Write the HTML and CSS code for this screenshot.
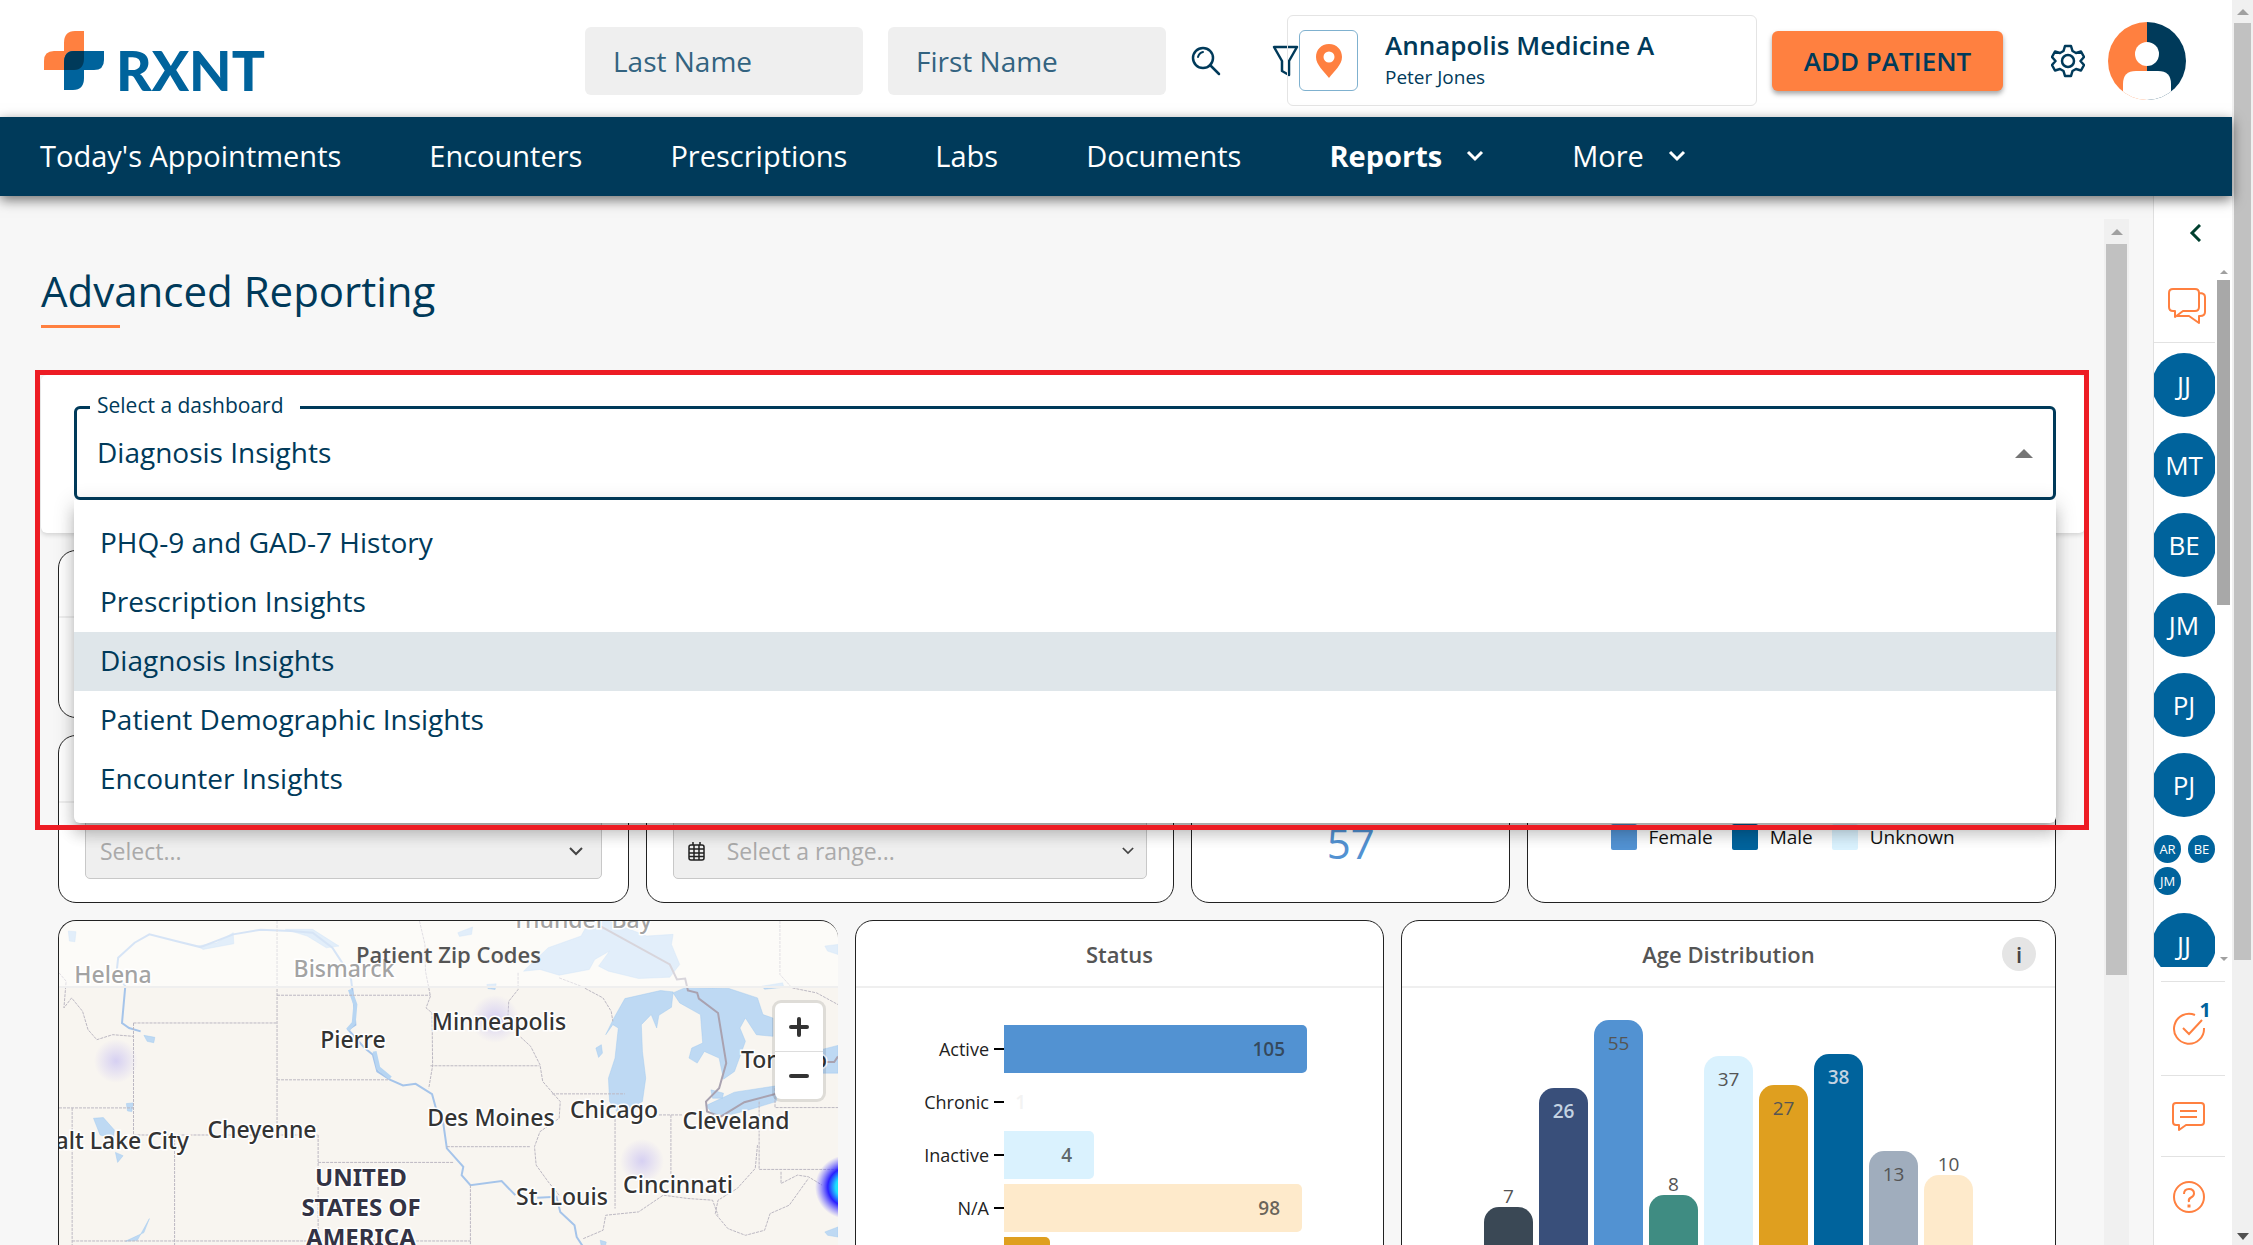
FILE: index.html
```html
<!DOCTYPE html>
<html lang="en">
<head>
	<meta charset="utf-8">
	<title>Advanced Reporting</title>
	<link rel="stylesheet" href="styles.css">
</head>
<body>

	<div class="page">

		<header class="topbar">
			<a class="logo" href="#" aria-label="RXNT home">
				<svg width="60" height="59" viewBox="0 0 60 59">
					<path fill="#ff8040" d="M20 20V12Q20 0 31 0H40V26Q40 39 29 39H0V30Q0 20 10 20Z"/>
					<path fill="#00639c" d="M29 20H60V29Q60 39 50 39H40V47Q40 59 29 59H20V32Q20 20 29 20Z"/>
					<path fill="#003a5a" d="M30 20H40V27Q40 39 30 39H20V32Q20 20 30 20Z"/>
				</svg>
				<span class="logo-text">RXNT</span>
			</a>

			<form class="search">
				<input type="text" placeholder="Last Name" aria-label="Last Name">
				<input type="text" placeholder="First Name" aria-label="First Name">
				<button type="button" class="icon-button search-button" aria-label="Search">
					<svg width="30" height="30" viewBox="0 0 30 30" fill="none" stroke="#003a5a" stroke-width="2.500" stroke-linecap="round">
						<circle cx="12" cy="12" r="10"/><path d="M19 19l9 9"/><path stroke-width="2" d="M7 11q1-4 5-5"/>
					</svg>
				</button>
				<button type="button" class="icon-button" aria-label="Filter">
					<svg width="27" height="32" viewBox="0 0 27 32" fill="none" stroke="#003a5a" stroke-width="2.500" stroke-linejoin="round">
						<path d="M2 2H25L17 16V30L10 26V16Z"/>
					</svg>
				</button>
			</form>

			<button class="location">
				<span class="location-pin">
					<svg width="26" height="34" viewBox="0 0 26 34"><path fill="#ff8040" fill-rule="evenodd" d="M13 0C5 0 0 6 0 13c0 8 8 14 13 21 5-7 13-13 13-21C26 6 21 0 13 0zm0 7.500a5.500 5.500 0 1 1 0 11 5.500 5.500 0 0 1 0-11z"/></svg>
				</span>
				<span>
					<span class="location-name">Annapolis Medicine A</span>
					<span class="location-user">Peter Jones</span>
				</span>
			</button>

			<button class="add-patient">ADD PATIENT</button>

			<button class="icon-button settings" aria-label="Settings">
				<svg width="34" height="34" viewBox="0 0 34 34" fill="none" stroke="#003a5a" stroke-width="2.500" stroke-linejoin="round">
					<path d="M14 2h6l1.500 5 3.500 2 5-1.500 3 5.500-3.500 4 3.500 4-3 5.500-5-1.500-3.500 2-1.500 5h-6l-1.500-5-3.500-2-5 1.500-3-5.500 3.500-4-3.500-4 3-5.500 5 1.500 3.500-2z"/>
					<circle cx="17" cy="17" r="6"/>
				</svg>
			</button>

			<button class="icon-button" aria-label="Account">
				<svg width="78" height="78" viewBox="0 0 78 78">
					<clipPath id="face"><circle cx="39" cy="39" r="39"/></clipPath>
					<g clip-path="url(#face)">
						<path fill="#ff8040" d="M0 0H39V78H0z"/><path fill="#003a5a" d="M39 0H78V78H39z"/>
						<circle fill="#fff" cx="39" cy="32" r="12"/>
						<path fill="#fff" d="M15 78V62Q15 49 28 49H50Q63 49 63 62V78z"/>
					</g>
				</svg>
			</button>
		</header>

		<nav class="nav">
			<a href="#">Today's Appointments</a>
			<a href="#">Encounters</a>
			<a href="#">Prescriptions</a>
			<a href="#">Labs</a>
			<a href="#">Documents</a>
			<a href="#" class="active">Reports <svg width="18" height="12" viewBox="0 0 18 12"><path d="M2 2l7 7 7-7"/></svg></a>
			<a href="#">More <svg width="18" height="12" viewBox="0 0 18 12"><path d="M2 2l7 7 7-7"/></svg></a>
		</nav>

		<div class="main">

			<main class="content">
				<h1>Advanced Reporting</h1>

				<div class="picker">
					<div class="picker-field">
						<label for="dashboard">Select a dashboard</label>
						<select id="dashboard">
							<option>PHQ-9 and GAD-7 History</option>
							<option>Prescription Insights</option>
							<option selected>Diagnosis Insights</option>
							<option>Patient Demographic Insights</option>
							<option>Encounter Insights</option>
						</select>
						<svg class="caret" width="18" height="9" viewBox="0 0 18 9"><path fill="#757575" d="M0 9L9 0l9 9z"/></svg>
						<ul class="menu">
							<li>PHQ-9 and GAD-7 History</li>
							<li>Prescription Insights</li>
							<li class="selected">Diagnosis Insights</li>
							<li>Patient Demographic Insights</li>
							<li>Encounter Insights</li>
						</ul>
					</div>
					<div class="callout"></div>
				</div>

				<div class="row row-top">
					<section class="card filter"><h2></h2></section>
				</div>

				<div class="row row-filters">
					<section class="card filter">
						<h2></h2>
						<div class="filter-body">
							<select class="field" aria-label="Diagnosis"><option>Select...</option></select>
							<svg class="field-arrow" width="14" height="9" viewBox="0 0 14 9"><path d="M1 1l6 6 6-6"/></svg>
						</div>
					</section>
					<section class="card filter">
						<h2></h2>
						<div class="filter-body">
							<button class="field range">
								<svg width="17" height="19" viewBox="0 0 17 19" fill="none" stroke="#222" stroke-width="1.500">
									<rect x="1" y="3" width="15" height="15" rx="2"/><path d="M1 7h15M1 11h15M1 14.500h15M6 3v15M11 3v15M5 0v3M12 0v3"/>
								</svg>
								<span>Select a range...</span>
							</button>
							<svg class="field-arrow range-arrow" width="12" height="8" viewBox="0 0 14 9"><path d="M1 1l6 6 6-6"/></svg>
						</div>
					</section>
					<section class="card filter">
						<h2></h2>
						<div class="count">57</div>
					</section>
					<section class="card filter">
						<h2></h2>
						<ul class="legend">
							<li><i class="blue"></i>Female</li>
							<li><i class="navy"></i>Male</li>
							<li><i class="ice"></i>Unknown</li>
						</ul>
					</section>
				</div>

				<div class="row row-charts">
					<section class="card map">
						<h2>Patient Zip Codes</h2>
						<svg class="map-canvas" width="779" height="326" viewBox="0 0 779 326">
							<defs>
								<radialGradient id="heat"><stop offset="0" stop-color="#d6d0f2"/><stop offset="1" stop-color="#d6d0f2" stop-opacity="0"/></radialGradient>
								<radialGradient id="hot"><stop offset="0" stop-color="#19ffb0"/><stop offset=".35" stop-color="#1ee0ff"/><stop offset=".6" stop-color="#2a20ff"/><stop offset="1" stop-color="#5a50ff" stop-opacity="0"/></radialGradient>
							</defs>
							<svg width="779" height="326" viewBox="107 60 1422 975" preserveAspectRatio="none">
								<!-- lakes -->
								<g fill="#bed9f3" stroke="#9fc8ef">
									<path d="M955 210L1000 140L1060 105L1075 60L1110 60L1180 105L1228 100L1225 130L1240 190L1222 228L1165 232L1110 210L1092 195L1112 150L1085 175L1075 205L1020 222L985 205Z"/>
									<path d="M1105 400L1120 350L1140 292L1205 268L1228 272L1225 318L1202 342L1198 380L1188 340L1170 370L1172 450L1178 530L1172 600L1130 640L1112 600L1110 530L1122 470L1128 380L1118 370Z"/>
									<path d="M1228 275L1252 258L1330 262L1382 290L1392 340L1410 350L1410 405L1380 400L1360 350L1350 380L1360 420L1340 510L1320 533L1312 470L1285 450L1272 485L1257 470L1262 440L1282 425L1278 340L1240 305Z"/>
									<path d="M1288 612L1340 572L1420 552L1416 600L1360 628L1325 642L1300 636Z"/>
									<path d="M1498 445L1529 432V515L1500 515Z"/>
									<path d="M124 90L138 92L136 122L126 120ZM835 95L862 78L860 100L838 106ZM888 250L905 248L903 265L890 262ZM262 402L282 408L280 424L268 420ZM1087 440L1097 430L1099 455L1092 468ZM170 650L188 648L208 685L206 712L182 700ZM210 752L224 762L214 782ZM230 606L242 604L240 630L232 628ZM1390 255L1428 245L1430 258L1395 264ZM1505 135L1529 130V160L1510 150ZM1297 565L1320 575L1318 590L1300 590ZM360 135L395 125L425 95L426 128L370 145ZM520 85L570 85L618 135L595 140L560 105ZM1505 990L1529 975V1005L1510 1000ZM1095 1015L1106 1020L1104 1035H1097ZM228 1018L262 992L272 950L250 1015Z"/>
								</g>
								<g fill="none" stroke="#a5c4ea" stroke-width="2">
									<path vector-effect="non-scaling-stroke" d="M256 390L235 380L222 365L228 255L212 215L215 170L245 125L272 100L320 120L365 138L425 100L475 86L530 90L570 95L606 140L622 180L640 232L645 300L648 370L635 385L665 440L680 460L688 510L712 535L735 552L758 547L788 578L795 620L808 660L815 740L845 795L842 820L858 850L915 838L940 880"/>
									<path vector-effect="non-scaling-stroke" stroke-width="4" stroke="#b7d5f2" d="M638 265L648 310L645 365L634 386M683 450L690 500L712 530"/>
									<path vector-effect="non-scaling-stroke" d="M980 888L1015 885L1022 930L1048 970L1052 1005L1064 1035"/>
								</g>
								<!-- state borders -->
								<g fill="none" stroke="#bcb8c2" stroke-dasharray="3 1">
									<path vector-effect="non-scaling-stroke" d="M505 60V670M505 282H785M243 365H505M243 365V698M505 535H710M785 493H984M107 619H243M131 619V1035M243 700H580M318 700V1035M580 700V1035M580 782H828M858 850V1035M131 1017H858M815 735H968M1007 577H1140M1122 640V920M1224 640V880M1195 640H1245M1385 600V803H1529M1414 560V618H1529"/>
									<path vector-effect="non-scaling-stroke" d="M765 60L775 130L776 210L785 285L777 320L788 335L789 493L782 560M945 215V265L928 300L926 360L945 400L968 435L985 490L990 540L1022 600L1020 650L985 690L975 735L978 790L1000 840L1020 880M1020 230L1060 255L1100 290L1115 330L1118 360M1423 60V220L1445 260L1490 275L1529 310M107 215L120 240L116 320L130 290L150 330L160 385L176 415L205 400L243 405M1382 730L1378 800L1345 860L1310 895L1305 935L1328 980L1360 1000L1395 985L1405 935L1440 910L1475 830M1064 1010L1100 985L1105 940L1165 930L1210 880L1255 890L1300 895L1310 940M1425 810V845L1455 820L1475 825L1500 850"/>
								</g>
								<path vector-effect="non-scaling-stroke" fill="none" stroke="#a9a2b0" stroke-width="2" d="M1095 75L1222 190L1235 235L1250 232L1255 268L1272 275L1275 292L1310 335L1325 485L1312 560L1288 600L1290 630L1315 645L1358 602L1420 575M1500 482H1522L1529 465"/>
							</svg>
							<g fill="url(#heat)"><circle cx="57" cy="140" r="22"/><circle cx="436" cy="98" r="24"/><circle cx="583" cy="240" r="22"/></g>
							<circle fill="url(#hot)" cx="788" cy="266" r="32"/>
							<g class="map-label">
								<text x="54" y="62">Helena</text>
								<text x="285" y="56">Bismarck</text>
								<text x="523" y="7">Thunder Bay</text>
								<text x="440" y="109">Minneapolis</text>
								<text x="294" y="127">Pierre</text>
								<text x="725" y="147">Toronto</text>
								<text x="432" y="205">Des Moines</text>
								<text x="555" y="197">Chicago</text>
								<text x="677" y="208">Cleveland</text>
								<text x="203" y="217">Cheyenne</text>
								<text x="57" y="228">Salt Lake City</text>
								<text x="619" y="272">Cincinnati</text>
								<text x="503" y="284">St. Louis</text>
								<text class="country" x="302" y="265">UNITED</text>
								<text class="country" x="302" y="295">STATES OF</text>
								<text class="country" x="302" y="325">AMERICA</text>
							</g>
						</svg>
						<div class="map-zoom">
							<button aria-label="Zoom in"><svg width="20" height="20"><path d="M10 2v16M2 10h16"/></svg></button>
							<button aria-label="Zoom out"><svg width="20" height="20"><path d="M2 10h16"/></svg></button>
						</div>
					</section>

					<section class="card">
						<h2>Status</h2>
						<div class="status">
							<span class="name">Active</span><div class="bar blue" style="width: 303px">105</div>
							<span class="name">Chronic</span><div class="bar tiny" style="width: 22px">1</div>
							<span class="name">Inactive</span><div class="bar ice" style="width: 90px">4</div>
							<span class="name">N/A</span><div class="bar cream" style="width: 298px">98</div>
							<span class="name"></span><div class="bar gold" style="width: 46px"></div>
						</div>
					</section>

					<section class="card">
						<h2>Age Distribution</h2>
						<button class="info" aria-label="Info">i</button>
						<div class="ages">
							<div class="age out slate" style="height: 94px"><span>7</span></div>
							<div class="age light indigo" style="height: 213px"><span>26</span></div>
							<div class="age blue" style="height: 281px"><span>55</span></div>
							<div class="age out teal" style="height: 106px"><span>8</span></div>
							<div class="age ice" style="height: 245px"><span>37</span></div>
							<div class="age gold" style="height: 216px"><span>27</span></div>
							<div class="age light navy" style="height: 247px"><span>38</span></div>
							<div class="age gray" style="height: 150px"><span>13</span></div>
							<div class="age out cream" style="height: 126px"><span>10</span></div>
						</div>
					</section>
				</div>
			</main>

			<div class="scroll content-scroll">
				<svg width="12" height="6"><path d="M0 6L6 0l6 6z"/></svg>
				<div class="thumb"></div>
			</div>

			<aside class="side">
				<button class="icon-button collapse" aria-label="Collapse">
					<svg width="12" height="18" viewBox="0 0 12 18" fill="none" stroke="#00402f" stroke-width="3"><path d="M11 1L3 9l8 8"/></svg>
				</button>
				<div class="people">
					<div class="people-list">
						<button class="icon-button chats" aria-label="Chats">
							<svg width="38" height="36" viewBox="0 0 38 36" fill="none" stroke="#ff8040" stroke-width="2" stroke-linejoin="round">
								<path d="M5 1H27Q31 1 31 5V19Q31 23 27 23H15L7 29V23H5Q1 23 1 19V5Q1 1 5 1ZM31 5Q37 5 37 9V24Q37 28 32 28H31V35L21 28H9"/>
							</svg>
						</button>
						<button class="person">JJ</button>
						<button class="person">MT</button>
						<button class="person">BE</button>
						<button class="person">JM</button>
						<button class="person">PJ</button>
						<button class="person">PJ</button>
						<div class="group">
							<button>AR</button>
							<button>BE</button>
							<button>JM</button>
						</div>
						<button class="person">JJ</button>
					</div>
					<div class="people-scroll">
						<svg width="8" height="4"><path d="M0 4l4-4 4 4z"/></svg>
						<div class="thumb"></div>
						<svg class="down" width="8" height="4"><path d="M0 0l4 4 4-4z"/></svg>
					</div>
				</div>
				<div class="tools">
					<button class="tasks" aria-label="Tasks">
						<svg width="34" height="34" viewBox="0 0 34 34" fill="none" stroke="#ff8040" stroke-width="2"><path d="M23 3A15 15 0 1 0 32 16M11 16l6 6L30 8"/></svg>
						<b>1</b>
					</button>
					<button class="comments" aria-label="Comments">
						<svg width="34" height="30" viewBox="0 0 34 30" fill="none" stroke="#ff8040" stroke-width="2" stroke-linejoin="round"><path d="M4 2H29Q32 2 32 5V21Q32 24 29 24H14L7 29V24H4Q1 24 1 21V5Q1 2 4 2ZM8 10H25M8 16H25"/></svg>
					</button>
					<button class="help" aria-label="Help">
						<svg width="34" height="34" viewBox="0 0 34 34" fill="none" stroke="#ff8040" stroke-width="2"><circle cx="17" cy="17" r="15"/><path d="M12 14Q12 9 17 9T22 13.500Q22 16 19 17.500T17 22"/><path stroke-width="3" d="M17 24.500v3"/></svg>
					</button>
				</div>
			</aside>
		</div>
	</div>

	<div class="scroll page-scroll">
		<svg width="12" height="6"><path d="M0 6L6 0l6 6z"/></svg>
		<div class="thumb"></div>
		<svg class="down" width="12" height="7"><path d="M0 0l6 7 6-7z"/></svg>
	</div>

</body>
</html>
```
FILE: styles.css
```css
* {
	box-sizing: border-box;
}
body {
	margin: 0;
	display: flex;
	height: 100vh;
	overflow: hidden;
	background: #f7f7f7;
	color: #003a5a;
	font-family: "Open Sans", sans-serif;
	font-size: 28px;
}
button, input, select {
	font-family: inherit;
	color: inherit;
}
button {
	border: 0;
	padding: 0;
	background: none;
	cursor: pointer;
}
svg {
	display: block;
}
ul {
	margin: 0;
	padding: 0;
	list-style: none;
}
.page {
	flex: 1;
	min-width: 0;
	display: flex;
	flex-direction: column;
}

/* top bar */
.topbar {
	flex: none;
	display: flex;
	align-items: center;
	height: 117px;
	padding: 4px 46px 0 44px;
	background: #fff;
}
.logo {
	display: flex;
	align-items: flex-end;
	gap: 12px;
	margin-right: auto;
	text-decoration: none;
	color: #00639c;
}
.logo-text {
	font-family: Lato, sans-serif;
	font-weight: 900;
	font-size: 55px;
	line-height: 40px;
}
.search {
	display: flex;
	align-items: center;
	gap: 25px;
}
.search input {
	width: 278px;
	height: 68px;
	padding: 0 28px;
	border: 0;
	border-radius: 6px;
	background: #efefef;
	font-size: 28px;
}
.search input::placeholder {
	color: #336380;
	opacity: 1;
}
.search-button {
	margin-right: 26px;
}
.location {
	display: flex;
	align-items: center;
	gap: 27px;
	width: 470px;
	height: 91px;
	margin: 0 15px 0 -12px;
	padding: 0 11px;
	border: 1px solid #e4e4e4;
	border-radius: 6px;
	text-align: left;
}
.location-pin {
	display: flex;
	align-items: center;
	justify-content: center;
	width: 59px;
	height: 61px;
	border: 1px solid #7fb1cf;
	border-radius: 6px;
	background: #fff;
}
.location-name, .location-user {
	display: block;
}
.location-name {
	font-size: 26px;
	font-weight: 600;
	line-height: 32px;
}
.location-user {
	font-size: 19px;
	line-height: 32px;
}
.add-patient {
	width: 231px;
	height: 60px;
	margin-right: 48px;
	border-radius: 6px;
	background: #ff8040;
	box-shadow: 0 3px 5px rgba(0, 0, 0, .35);
	font-size: 26px;
	font-weight: 600;
}
.settings {
	margin-right: 23px;
}

/* navigation */
.nav {
	flex: none;
	position: relative;
	display: flex;
	align-items: center;
	gap: 88px;
	height: 79px;
	padding: 0 40px 2px;
	background: #003a5a;
	box-shadow: 0 4px 12px rgba(0, 0, 0, .55);
}
.nav a {
	display: flex;
	align-items: center;
	gap: 24px;
	color: #fff;
	font-size: 29px;
	text-decoration: none;
}
.nav .active {
	font-weight: 700;
}
.nav path {
	fill: none;
	stroke: #fff;
	stroke-width: 3;
}

.main {
	flex: 1;
	min-height: 0;
	display: flex;
}
.content {
	flex: 1;
	min-width: 0;
	overflow: hidden;
	padding: 67px 19px 0 41px;
}
h1 {
	margin: 0 0 47px;
	font-size: 42px;
	font-weight: 400;
	line-height: 56px;
}
h1::after {
	content: "";
	display: block;
	width: 79px;
	height: 3px;
	margin-top: 6px;
	background: #ff8040;
}

/* dashboard picker */
.picker {
	position: relative;
	z-index: 1;
	padding: 31px 29px 33px 33px;
	border-radius: 6px;
	background: #fff;
	box-shadow: 0 2px 5px rgba(0, 0, 0, .15);
}
.picker-field {
	position: relative;
}
.picker-field select {
	display: block;
	width: 100%;
	height: 94px;
	padding: 0 20px 2px;
	appearance: none;
	border: 3px solid #003a5a;
	border-radius: 6px;
	background: #fff;
	font-size: 28px;
}
.picker-field label {
	position: absolute;
	top: -13px;
	left: 16px;
	padding: 0 16px 0 7px;
	background: #fff;
	font-size: 21px;
	line-height: 24px;
}
.caret {
	position: absolute;
	top: 43px;
	right: 23px;
}
.menu {
	position: absolute;
	top: 94px;
	left: 0;
	right: 0;
	padding: 14px 0;
	border-radius: 0 0 6px 6px;
	background: #fff;
	box-shadow: 0 7px 7px -4px rgba(0, 0, 0, .2), 0 12px 14px 1px rgba(0, 0, 0, .14), 0 4px 20px 3px rgba(0, 0, 0, .12);
}
.menu li {
	padding: 0 26px 2px;
	line-height: 57px;
}
.menu .selected {
	background: #dfe6ea;
}
.callout {
	position: absolute;
	top: -5px;
	left: -6px;
	right: -4px;
	height: 460px;
	border: 5px solid #ed1c24;
	pointer-events: none;
}

/* cards */
.row {
	display: grid;
	gap: 17px;
	margin: 17px 29px 0 17px;
}
.row-top {
	grid-template-columns: 1fr;
}
.row-filters {
	grid-template-columns: 571fr 529fr 319fr 529fr;
}
.row-charts {
	grid-template-columns: 780fr 529fr 655fr;
}
.card {
	position: relative;
	min-width: 0;
	border: 1px solid #222;
	border-radius: 18px;
	background: #fff;
}
.filter {
	height: 168px;
}
.card h2 {
	height: 67px;
	margin: 0;
	border-bottom: 2px solid #efefef;
	color: #555;
	font-size: 22px;
	font-weight: 600;
	line-height: 67px;
	text-align: center;
}
.filter-body {
	position: relative;
	margin: 10px 26px;
}
.field {
	display: flex;
	align-items: center;
	gap: 22px;
	width: 100%;
	height: 66px;
	padding: 10px 14px 0;
	appearance: none;
	border: 1px solid #c8c8c8;
	border-radius: 5px;
	background: #efefef;
	color: #aaa;
	opacity: 1;
	font-size: 23px;
}
.field-arrow {
	position: absolute;
	top: 34px;
	right: 19px;
	fill: none;
	stroke: #444;
	stroke-width: 2;
}
.range-arrow {
	right: 13px;
}
.count {
	color: #5292d2;
	font-size: 42px;
	line-height: 80px;
	text-align: center;
}
.legend {
	display: flex;
	justify-content: center;
	gap: 19px;
	padding: 21px 18px 0 0;
	color: #111;
	font-size: 19px;
	line-height: 27px;
}
.legend li {
	display: flex;
	gap: 12px;
}
.legend i {
	width: 26px;
	height: 26px;
	border-radius: 2px;
}

.blue { background: #5292d2; }
.navy { background: #00639c; }
.ice { background: #daf2fe; }
.cream { background: #feeacb; }
.gold { background: #df9f1f; }
.slate { background: #3a4855; }
.indigo { background: #394f7a; }
.teal { background: #3f8c82; }
.gray { background: #a0adbd; }

/* map */
.map {
	height: 400px;
	overflow: hidden;
	border-right: 0;
	background: #f8f5f0;
}
.map h2 {
	position: relative;
	z-index: 1;
	background: rgba(255, 255, 255, .55);
}
.map-canvas {
	width: 100%;
	height: auto;
	margin-top: -67px;
}
.map-label {
	fill: #333;
	stroke: #fff;
	stroke-width: 3;
	paint-order: stroke;
	text-anchor: middle;
	font-family: "Noto Sans", sans-serif;
	font-size: 23px;
	font-weight: 500;
}
.map-label .country {
	fill: #334;
	font-size: 24px;
	font-weight: 700;
}
.map-zoom {
	position: absolute;
	top: 82px;
	right: 15px;
	border-radius: 6px;
	background: #fff;
	box-shadow: 0 0 0 3px rgba(0, 0, 0, .1);
}
.map-zoom button {
	display: flex;
	align-items: center;
	justify-content: center;
	width: 48px;
	height: 48px;
}
.map-zoom button + button {
	border-top: 1px solid #ddd;
}
.map-zoom path {
	stroke: #333;
	stroke-width: 4;
	stroke-linecap: round;
}

/* status chart */
.status {
	display: grid;
	grid-template-columns: 133px 1fr;
	grid-auto-rows: 48px;
	row-gap: 5px;
	column-gap: 15px;
	padding-top: 37px;
	color: #222;
	font-size: 18px;
	line-height: 48px;
}
.name {
	text-align: right;
}
.bar {
	position: relative;
	padding-right: 22px;
	border-radius: 0 5px 5px 0;
	color: rgba(40, 40, 40, .7);
	font-size: 19px;
	font-weight: 600;
	text-align: right;
}
.bar::before {
	content: "";
	position: absolute;
	top: 23px;
	left: -10px;
	width: 10px;
	height: 2px;
	background: #000;
}
.tiny {
	padding-right: 0;
	color: #f3f3f3;
}

/* age chart */
.info {
	position: absolute;
	top: 16px;
	right: 19px;
	width: 34px;
	height: 34px;
	border-radius: 50%;
	background: #e5e5e5;
	color: #444;
	font-size: 22px;
	font-weight: 600;
	line-height: 34px;
}
.ages {
	display: flex;
	align-items: flex-end;
	justify-content: center;
	gap: 6px;
	height: 313px;
}
.age {
	width: 49px;
	border-radius: 15px 15px 0 0;
	color: #555;
	font-size: 19px;
	line-height: 26px;
	text-align: center;
}
.age span {
	display: block;
	margin-top: 10px;
}
.out span {
	margin-top: -24px;
}
.light {
	color: #c4d3e2;
	font-weight: 600;
}

/* scroll bars */
.scroll {
	flex: none;
	display: flex;
	flex-direction: column;
	align-items: center;
	background: #f0f0f0;
	fill: #a0a0a0;
}
.thumb {
	background: #c1c1c1;
}
.content-scroll {
	width: 25px;
	margin: 23px 24px 0 0;
	padding-top: 10px;
}
.content-scroll .thumb {
	width: 21px;
	height: 731px;
	margin-top: 9px;
}
.page-scroll {
	width: 21px;
	padding: 9px 0 5px;
}
.page-scroll .thumb {
	width: 17px;
	height: 937px;
	margin-top: 8px;
}
.page-scroll .down {
	margin-top: auto;
	fill: #505050;
}

/* side panel */
.side {
	flex: none;
	display: flex;
	flex-direction: column;
	width: 79px;
	border-left: 1px solid #e0e0e0;
	background: #fff;
}
.collapse {
	margin: 28px 31px 22px auto;
}
.people {
	display: flex;
	gap: 2px;
	height: 703px;
}
.people-list {
	width: 61px;
	overflow: hidden;
}
.chats {
	width: 100%;
	height: 79px;
	margin-bottom: 10px;
	padding: 15px 0 0 14px;
	border-bottom: 1px solid #e2e2e2;
}
.chats svg {
	margin-top: -10px;
}
.person {
	display: block;
	width: 64px;
	height: 64px;
	margin: 0 -2px 16px;
	border-radius: 50%;
	background: #00639c;
	color: #fff;
	font-size: 26px;
}
.group {
	display: flex;
	flex-wrap: wrap;
	gap: 4px 7px;
	margin: 18px 0;
}
.group button {
	width: 27px;
	height: 28px;
	border-radius: 50%;
	background: #00639c;
	color: #fff;
	font-size: 13px;
}
.people-scroll {
	display: flex;
	flex-direction: column;
	align-items: center;
	width: 13px;
	fill: #a0a0a0;
	padding: 6px 0;
}
.people-scroll .thumb {
	width: 13px;
	height: 325px;
	margin-top: 6px;
	background: #a8a8a8;
}
.people-scroll .down {
	margin-top: auto;
}
.tools {
	margin: 14px 7px 0;
}
.tools button {
	position: relative;
	display: flex;
	align-items: center;
	width: 100%;
	height: 81px;
	padding-left: 11px;
	border-top: 1px solid #e2e2e2;
}
.tools .tasks {
	height: 94px;
}
.tasks b {
	position: absolute;
	top: 16px;
	right: 14px;
	color: #00639c;
	font-size: 20px;
	line-height: 24px;
}
```
